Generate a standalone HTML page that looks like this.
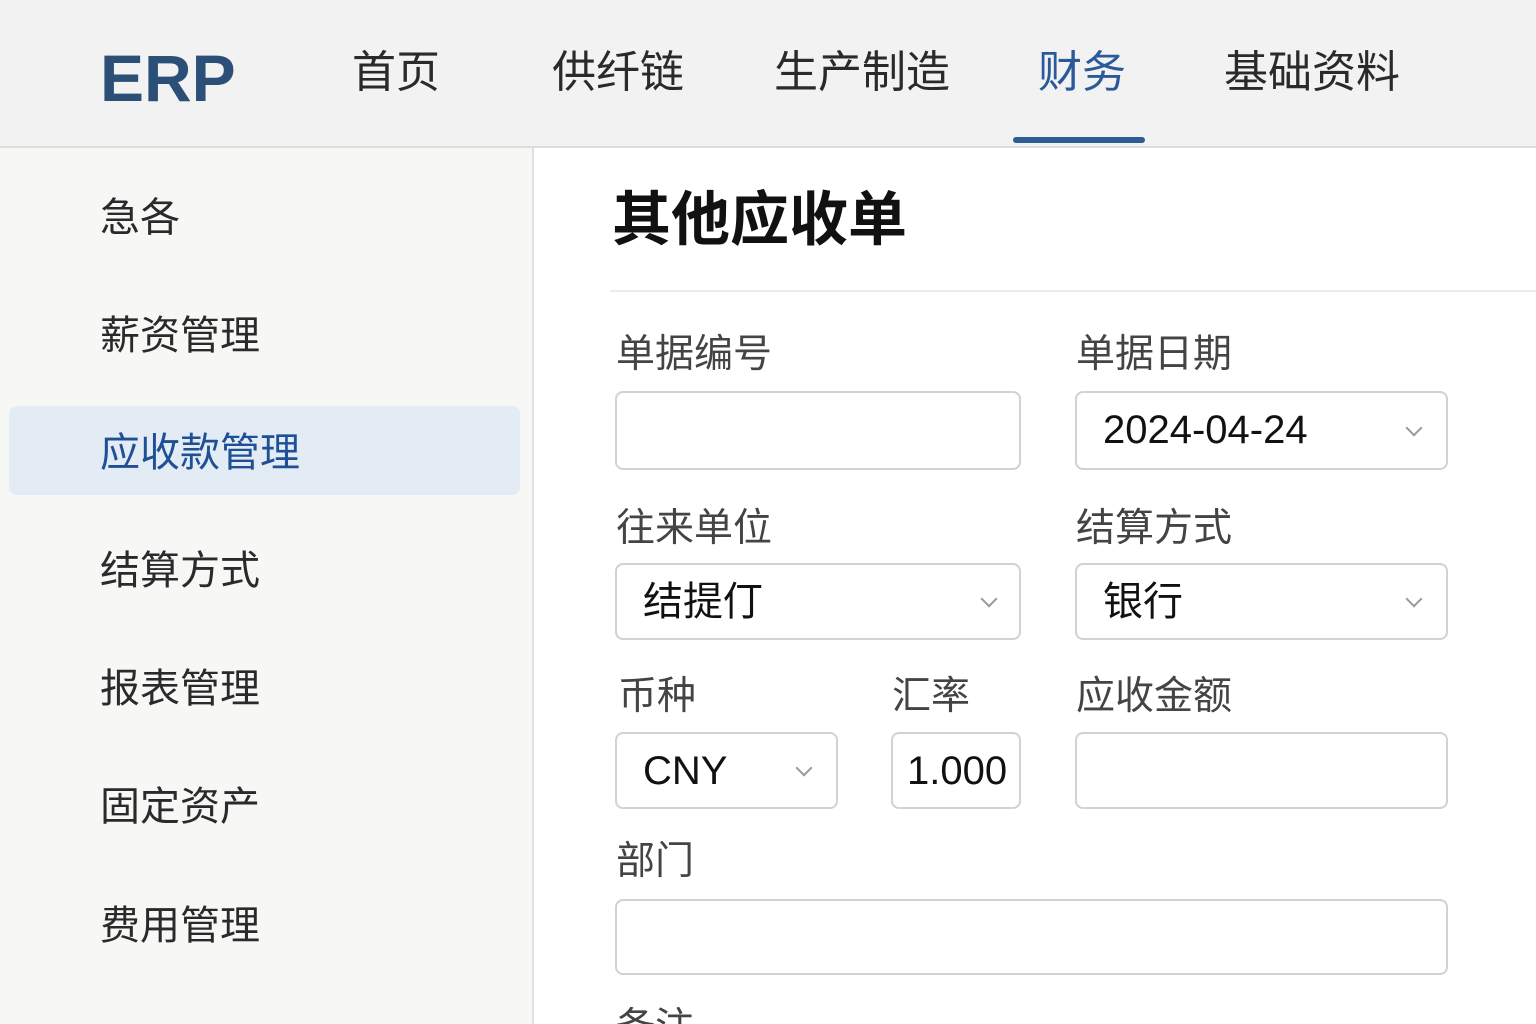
<!DOCTYPE html>
<html><head><meta charset="utf-8"><style>
*{margin:0;padding:0;box-sizing:border-box}
html,body{width:1536px;height:1024px;overflow:hidden}
body{background:#fff;font-family:"Liberation Sans","Noto Sans CJK SC",sans-serif;position:relative;color:#222}
.hdr{position:absolute;left:0;top:0;width:1536px;height:148px;background:#f2f2f2;border-bottom:2px solid #dcdcdc}
.logo{position:absolute;left:100px;top:40px;font-size:66px;font-weight:bold;color:#2c4f78;letter-spacing:0px}
.nav{position:absolute;top:45px;font-size:44px;color:#2a2a2a;line-height:56px}
.nav.act{color:#2b5a9a}
.ul{position:absolute;left:1013px;top:137px;width:132px;height:6px;background:#2d5b93;border-radius:3px}
.side{position:absolute;left:0;top:148px;width:534px;height:876px;background:#f7f7f5;border-right:2px solid #e0e0e0}
.si{position:absolute;left:100px;font-size:40px;color:#2a2a2a;line-height:50px}
.active{position:absolute;left:9px;top:406px;width:511px;height:89px;background:#e3ebf4;border-radius:8px}
.title{position:absolute;left:612px;top:182px;font-size:59px;font-weight:bold;color:#111;line-height:76px}
.sep{position:absolute;left:610px;top:290px;width:926px;height:2px;background:#ececec}
.lb{position:absolute;font-size:39px;color:#444;line-height:50px}
.in{position:absolute;border:2px solid #d2d2d2;border-radius:8px;background:#fff;font-size:40px;color:#111;line-height:74px;padding-left:26px}
.ch{position:absolute;top:50%;width:12px;height:12px;border-right:2px solid #999;border-bottom:2px solid #999;transform:translateY(-75%) rotate(45deg)}
</style></head><body>
<div class="hdr">
<div class="logo">ERP</div>
<div class="nav" style="left:352px">首页</div>
<div class="nav" style="left:552px">供纤链</div>
<div class="nav" style="left:774px">生产制造</div>
<div class="nav act" style="left:1038px">财务</div>
<div class="nav" style="left:1224px">基础资料</div>
<div class="ul"></div>
</div>
<div class="side"></div>
<div class="active"></div>
<div class="si" style="top:193px">急各</div>
<div class="si" style="top:311px">薪资管理</div>
<div class="si" style="top:428px;color:#1f4f94">应收款管理</div>
<div class="si" style="top:546px">结算方式</div>
<div class="si" style="top:664px">报表管理</div>
<div class="si" style="top:782px">固定资产</div>
<div class="si" style="top:901px">费用管理</div>

<div class="title">其他应收单</div>
<div class="sep"></div>

<div class="lb" style="left:616px;top:330px">单据编号</div>
<div class="lb" style="left:1076px;top:330px">单据日期</div>
<div class="in" style="left:615px;top:391px;width:406px;height:79px"></div>
<div class="in" style="left:1075px;top:391px;width:373px;height:79px">2024-04-24<span class="ch" style="right:26px"></span></div>

<div class="lb" style="left:616px;top:504px">往来单位</div>
<div class="lb" style="left:1076px;top:504px">结算方式</div>
<div class="in" style="left:615px;top:563px;width:406px;height:77px">结提仃<span class="ch" style="right:24px"></span></div>
<div class="in" style="left:1075px;top:563px;width:373px;height:77px">银行<span class="ch" style="right:26px"></span></div>

<div class="lb" style="left:618px;top:672px">币种</div>
<div class="lb" style="left:892px;top:672px">汇率</div>
<div class="lb" style="left:1076px;top:672px">应收金额</div>
<div class="in" style="left:615px;top:732px;width:223px;height:77px">CNY<span class="ch" style="right:26px"></span></div>
<div class="in" style="left:891px;top:732px;width:130px;height:77px;padding-left:14px">1.000</div>
<div class="in" style="left:1075px;top:732px;width:373px;height:77px"></div>

<div class="lb" style="left:616px;top:837px">部门</div>
<div class="in" style="left:615px;top:899px;width:833px;height:76px"></div>
<div class="lb" style="left:616px;top:1003px">备注</div>
</body></html>
